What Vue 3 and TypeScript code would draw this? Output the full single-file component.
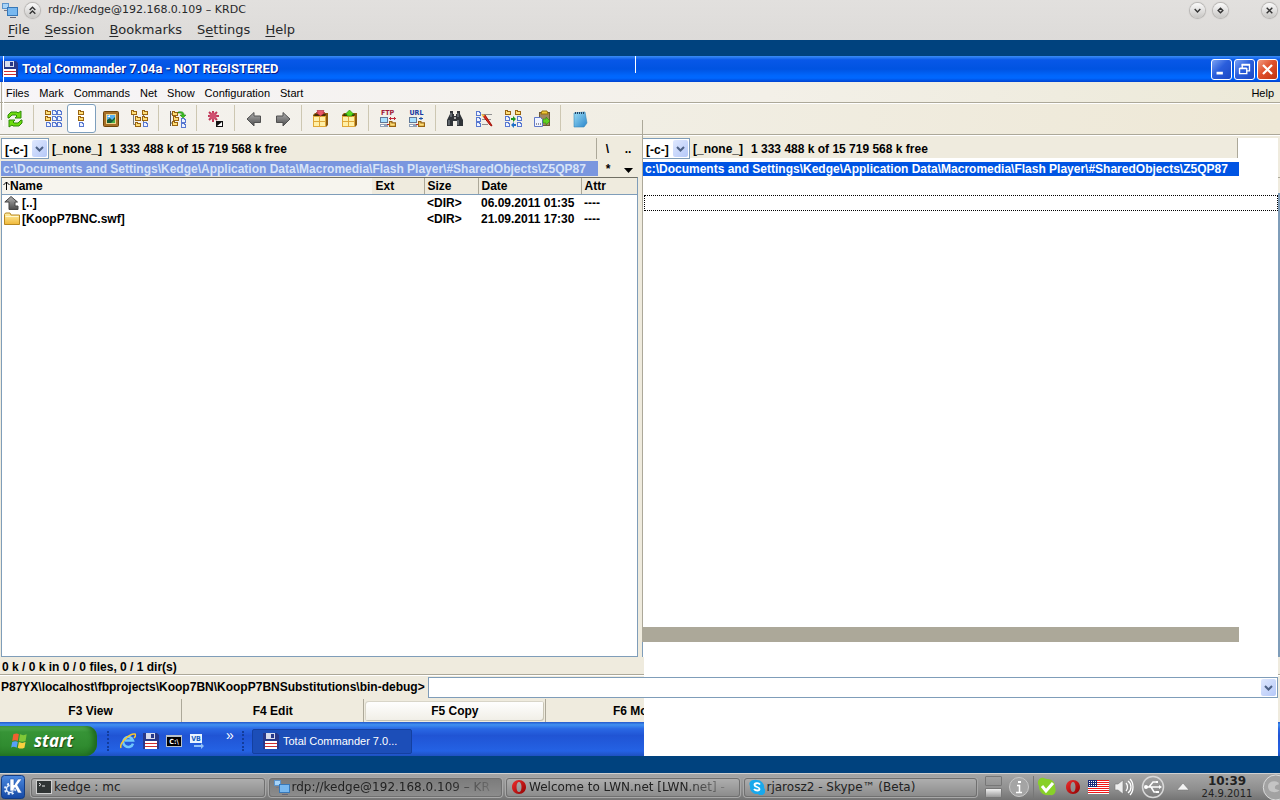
<script setup lang="ts">
import { ref } from 'vue'

interface Tool {
  id: string
  label: string
  caption?: string
  pressed?: boolean
}

interface Entry {
  icon: string
  name: string
  size: string
  date: string
  attr: string
}

interface Task {
  icon: string
  label: string
  active?: boolean
  faded?: boolean
}

const krdcMenu: [string, string, string][] = [
  ['', 'F', 'ile'],
  ['', 'S', 'ession'],
  ['', 'B', 'ookmarks'],
  ['S', 'e', 'ttings'],
  ['', 'H', 'elp'],
]

const menu = ['Files', 'Mark', 'Commands', 'Net', 'Show', 'Configuration', 'Start']

const toolGroups: Tool[][] = [
  [{ id: 'refresh', label: 'Reread source' }],
  [
    { id: 'brief', label: 'Brief view' },
    { id: 'full', label: 'Full view', pressed: true },
    { id: 'thumbs', label: 'Thumbnails' },
    { id: 'tree', label: 'Tree' },
  ],
  [{ id: 'branch', label: 'Branch view' }],
  [{ id: 'invert', label: 'Invert selection' }],
  [
    { id: 'back', label: 'Back' },
    { id: 'forward', label: 'Forward' },
  ],
  [
    { id: 'pack', label: 'Pack files' },
    { id: 'unpack', label: 'Unpack files' },
  ],
  [
    { id: 'ftp', label: 'FTP connect', caption: 'FTP' },
    { id: 'url', label: 'FTP new connection', caption: 'URL' },
  ],
  [
    { id: 'search', label: 'Search' },
    { id: 'rename', label: 'Multi-rename tool' },
    { id: 'sync', label: 'Synchronize directories' },
    { id: 'clip', label: 'Copy names to clipboard' },
  ],
  [{ id: 'notepad', label: 'Notepad' }],
]

const drive = ref('[-c-]')
const command = ref('')
const freeSpace = '1 333 488 k of 15 719 568 k free'
const path =
  'c:\\Documents and Settings\\Kedge\\Application Data\\Macromedia\\Flash Player\\#SharedObjects\\Z5QP87'
const prompt = 'P87YX\\localhost\\fbprojects\\Koop7BN\\KoopP7BNSubstitutions\\bin-debug>'

const entries: Entry[] = [
  { icon: 'up', name: '[..]', size: '<DIR>', date: '06.09.2011 01:35', attr: '----' },
  { icon: 'folder', name: '[KoopP7BNC.swf]', size: '<DIR>', date: '21.09.2011 17:30', attr: '----' },
]

const functionKeys = ['F3 View', 'F4 Edit', 'F5 Copy', 'F6 Move']
const quickLaunch: Tool[] = [
  { id: 'ie', label: 'Internet Explorer' },
  { id: 'floppy', label: 'Total Commander' },
  { id: 'cmd', label: 'Command Prompt', caption: 'C:\\' },
  { id: 'vb', label: 'VirtualBox', caption: 'VB' },
]

const tasks: Task[] = [
  { icon: 'term', label: 'kedge : mc' },
  { icon: 'krdc', label: 'rdp://kedge@192.168.0.109 – KR', active: true, faded: true },
  { icon: 'opera', label: 'Welcome to LWN.net [LWN.net] -', faded: true },
  { icon: 'skype', label: 'rjarosz2 - Skype™ (Beta)' },
]
</script>

<template>
  <div class="screen">
    <svg class="defs" aria-hidden="true">
      <defs>
        <linearGradient id="g-folder" x1="0" y1="0" x2="0" y2="1">
          <stop offset="0" stop-color="#fff0a8" />
          <stop offset="1" stop-color="#f0b838" />
        </linearGradient>
        <linearGradient id="g-arrow" x1="0" y1="0" x2="0" y2="1">
          <stop offset="0" stop-color="#b0b0b0" />
          <stop offset="1" stop-color="#4c4c4c" />
        </linearGradient>
        <linearGradient id="g-note" x1="0" y1="0" x2="1" y2="1">
          <stop offset="0" stop-color="#9adcf4" />
          <stop offset="1" stop-color="#2a86cc" />
        </linearGradient>
        <linearGradient id="g-k" x1="0" y1="0" x2="0" y2="1">
          <stop offset="0" stop-color="#4c8ae0" />
          <stop offset="1" stop-color="#1448a4" />
        </linearGradient>
        <linearGradient id="g-red" x1="0" y1="0" x2="1" y2="1">
          <stop offset="0" stop-color="#f03030" />
          <stop offset="1" stop-color="#900000" />
        </linearGradient>
      </defs>

      <symbol id="i-mf" viewBox="0 0 6 5">
        <path d="M0 0h3v1h3v4H0z" fill="#9a6410" />
        <path d="M1 1h1v1h3v2H1z" fill="#ffdf78" />
      </symbol>
      <symbol id="i-md" viewBox="0 0 5 5">
        <path d="M0 0h4v1h1v4H0z" fill="#5878d0" />
        <path d="M1 1h2v1h1v2H1z" fill="#eef3ff" />
      </symbol>

      <symbol id="i-refresh" viewBox="0 0 18 18">
        <path d="M2 8V5l3-3h6l1 1 3-2v7H9l2-2-1-1H6L3 8z" fill="#6edc10" stroke="#2f8a08" />
        <path d="M16 10v3l-3 3H7l-1-1-3 2v-7h6l-2 2 1 1h4l3-3z" fill="#6edc10" stroke="#2f8a08" />
      </symbol>
      <symbol id="i-brief" viewBox="0 0 18 18">
        <use href="#i-mf" x="1" y="0" width="6" height="5" /><use href="#i-mf" x="1" y="6" width="6" height="5" />
        <use href="#i-md" x="2" y="12" width="5" height="5" />
        <use href="#i-md" x="8" y="0" width="5" height="5" /><use href="#i-md" x="8" y="6" width="5" height="5" /><use href="#i-md" x="8" y="12" width="5" height="5" />
        <use href="#i-md" x="13" y="0" width="5" height="5" /><use href="#i-md" x="13" y="6" width="5" height="5" /><use href="#i-md" x="13" y="12" width="5" height="5" />
      </symbol>
      <symbol id="i-full" viewBox="0 0 18 18">
        <use href="#i-mf" x="5" y="0" width="6" height="5" /><use href="#i-mf" x="5" y="6" width="6" height="5" />
        <use href="#i-md" x="6" y="12" width="5" height="5" />
      </symbol>
      <symbol id="i-thumbs" viewBox="0 0 18 18">
        <rect x="1.5" y="1.5" width="15" height="15" rx="1" fill="#a87028" stroke="#704408" />
        <rect x="4" y="4" width="10" height="10" fill="#f0d890" />
        <rect x="5" y="5" width="8" height="8" fill="#58b0f0" />
        <path d="M5 10l3-2 2 2 3-3v6H5z" fill="#185c38" />
        <path d="M5 7l3-2v2z" fill="#fff" /><path d="M9 13l4-4v4z" fill="#48b048" />
      </symbol>
      <symbol id="i-tree" viewBox="0 0 18 18">
        <path d="M2.500 5v9.500H5M12.500 5v8" fill="none" stroke="#787878" />
        <use href="#i-mf" x="0" y="0" width="6" height="5" /><use href="#i-mf" x="4" y="6" width="6" height="5" /><use href="#i-mf" x="4" y="12" width="6" height="5" />
        <use href="#i-mf" x="11" y="0" width="6" height="5" /><use href="#i-mf" x="11" y="6" width="6" height="5" /><use href="#i-md" x="12" y="12" width="5" height="5" />
      </symbol>
      <symbol id="i-branch" viewBox="0 0 18 18">
        <path d="M1.500 1v15M2 4h2M2 13h3" stroke="#585858" />
        <use href="#i-mf" x="3" y="1" width="6" height="5" /><use href="#i-mf" x="4" y="6" width="6" height="5" /><use href="#i-mf" x="3" y="11" width="6" height="5" />
        <path d="M9 2c4-1 6 0 6 3h2l-3 3-3-3h2c0-2-1-2-4-2z" fill="#38c020" stroke="#187008" stroke-width=".5" />
        <use href="#i-md" x="12" y="8" width="5" height="5" /><use href="#i-md" x="12" y="13" width="5" height="5" />
      </symbol>
      <symbol id="i-invert" viewBox="0 0 18 18">
        <path d="M6 1v11M1 6h11M2 2l8 8M10 2l-8 8" stroke="#c03858" stroke-width="2" />
        <circle cx="6" cy="6" r="3.500" fill="#d05070" />
        <rect x="9.500" y="11.500" width="6" height="5" fill="#fff" stroke="#111" /><path d="M10 12h5l-5 4z" fill="#111" />
      </symbol>
      <symbol id="i-back" viewBox="0 0 18 18">
        <path d="M2 9l7-6.500V6h6.500v6.500H9V16z" fill="url(#g-arrow)" stroke="#505050" />
      </symbol>
      <symbol id="i-forward" viewBox="0 0 18 18">
        <path d="M16 9L9 2.500V6H2.500v6.500H9V16z" fill="url(#g-arrow)" stroke="#505050" />
      </symbol>
      <symbol id="i-box" viewBox="0 0 18 18">
        <path d="M1 5l2-2h13v12l-2 2H1z" fill="#8c5c10" />
        <path d="M3 4h11l-1 2H2z" fill="#463008" />
        <rect x="1" y="6" width="13" height="11" fill="#e0a838" />
        <path d="M2 7h5v4H2zM8 7h5v4H8zM2 12h5v4H2zM8 12h5v4H8z" fill="#fff0a8" />
      </symbol>
      <symbol id="i-pack" viewBox="0 0 18 18">
        <use href="#i-box" width="18" height="18" />
        <path d="M5 .5h7l-1 2h2L8.500 6 4 2.500h2z" fill="#e85868" stroke="#a82030" stroke-width=".6" />
      </symbol>
      <symbol id="i-unpack" viewBox="0 0 18 18">
        <use href="#i-box" width="18" height="18" />
        <path d="M8.500 0L13 4.500h-2V6H6V4.500H4z" fill="#58d820" stroke="#188008" stroke-width=".6" />
      </symbol>
      <symbol id="i-net" viewBox="0 0 18 18">
        <path d="M1 7h8v6H1z" fill="#607898" /><path d="M2 8h6v4H2z" fill="#a8e0ff" />
        <path d="M1 14h8v3H1z" fill="#90a0b8" /><path d="M2 15h3v1H2z" fill="#fff" />
        <path d="M8 14.500h3" stroke="#c02020" />
        <use href="#i-mf" x="10" y="11" width="7" height="6" />
      </symbol>
      <symbol id="i-ftp" viewBox="0 0 18 18">
        <use href="#i-net" width="18" height="18" />
        <path d="M10 8.500h7M11.500 7v3M15.500 7v3" stroke="#c02838" />
      </symbol>
      <symbol id="i-url" viewBox="0 0 18 18">
        <use href="#i-net" width="18" height="18" />
        <path d="M11 8.500h4M13 7v3" stroke="#1850a8" />
      </symbol>
      <symbol id="i-search" viewBox="0 0 18 18">
        <path d="M4 1h3v3h1v2h2V4h1V1h3v3l3 6v6h-6v-5H7v5H1v-6l3-6z" fill="#303438" />
        <path d="M3 10v5M12 10v5M5 3v4M12 3v4" stroke="#8c949c" /><path d="M8 7h2v2H8z" fill="#aaa" />
      </symbol>
      <symbol id="i-rename" viewBox="0 0 18 18">
        <use href="#i-md" x="1" y="1" width="5" height="5" /><use href="#i-md" x="1" y="7" width="5" height="5" /><use href="#i-md" x="1" y="12" width="5" height="5" />
        <path d="M7 4.500h10M7 9.500h9M7 14.500h6" stroke="#909090" />
        <path d="M8 6l7 9 2 1-1-2-6-9z" fill="#e02818" stroke="#a01008" /><path d="M6 4l4 1-2 2z" fill="#f8c040" />
      </symbol>
      <symbol id="i-sync" viewBox="0 0 18 18">
        <use href="#i-mf" x="1" y="0" width="6" height="5" /><use href="#i-mf" x="11" y="0" width="6" height="5" />
        <use href="#i-md" x="1" y="6" width="5" height="5" /><use href="#i-md" x="1" y="12" width="5" height="5" />
        <use href="#i-md" x="13" y="6" width="5" height="5" /><use href="#i-md" x="13" y="12" width="5" height="5" />
        <path d="M7 8h2V6l3 3-3 3v-2H7z" fill="#209820" /><path d="M12 14h-2v-2l-3 3 3 3v-2h2z" fill="#2070c8" />
      </symbol>
      <symbol id="i-clip" viewBox="0 0 18 18">
        <rect x="6.500" y="2.500" width="10" height="13" fill="#a08860" stroke="#6c5838" /><path d="M9 1h5l1 3H8z" fill="#f0c838" stroke="#987008" />
        <path d="M1.500 7.500h6l2 2v7h-8z" fill="#f0f4ff" stroke="#6078c8" /><path d="M3 14h1M5 14h1M7 14h1" stroke="#334" />
        <path d="M10 9h3V7l4 4-4 4v-2h-3z" fill="#60d020" stroke="#208008" stroke-width=".5" />
      </symbol>
      <symbol id="i-notepad" viewBox="0 0 18 18">
        <path d="M3 3l11-1 2 11-3 4H3z" fill="url(#g-note)" stroke="#3888b8" stroke-width=".6" />
        <path d="M4 3h1M6 3h1M8 3h1M10 3h1M12 3h1" stroke="#246" stroke-width="2" />
      </symbol>

      <symbol id="i-floppy" viewBox="0 0 16 16">
        <path d="M0 0h14l2 2v14H0z" fill="#283888" />
        <path d="M3 0h9v6H3z" fill="#d8dcec" /><path d="M8 1h3v4H8z" fill="#283888" />
        <path d="M2 8h12v8H2z" fill="#fff" /><path d="M2 10.500h12M2 13.500h12" stroke="#d03030" />
      </symbol>
      <symbol id="i-up" viewBox="0 0 16 16">
        <path d="M7 1.500L13.500 7H11v4h3v3.500H5V7H.8z" fill="url(#g-arrow)" stroke="#444" />
      </symbol>
      <symbol id="i-folder" viewBox="0 0 16 16">
        <path d="M.5 3.500l1-1.500H6l1 2h8.500v9.500H.5z" fill="url(#g-folder)" stroke="#b88820" /><path d="M1.500 5.500h13" stroke="#fff8d0" />
      </symbol>
      <symbol id="i-chevron" viewBox="0 0 9 6">
        <path d="M1 1l3.500 3.500L8 1" fill="none" stroke="#4d6185" stroke-width="2" />
      </symbol>
      <symbol id="i-ie" viewBox="0 0 16 16">
        <path d="M13 10.500A5 5 0 1 1 13 7.500H5" fill="none" stroke="#70c8fc" stroke-width="2.500" />
        <path d="M1 15C-1 10 10 0 15 1c1 1 0 3-1 4" fill="none" stroke="#f8c830" stroke-width="1.500" />
      </symbol>
      <symbol id="i-cmd" viewBox="0 0 16 16">
        <path d="M0 2h16v12H0z" fill="#b8c0c8" /><path d="M1 4h14v9H1z" fill="#000" />
      </symbol>
      <symbol id="i-vb" viewBox="0 0 16 16">
        <path d="M1 1h12v9H1z" fill="#e8f4ff" />
        <path d="M5 12h7v-2l3 3-3 3v-2H5z" fill="#90c0f8" />
      </symbol>
      <symbol id="i-flag" viewBox="0 0 18 16">
        <path d="M3 2c2-1 4-1 5 0L7 8C5 7 4 7 2 8z" fill="#f06030" /><path d="M9 2c2 1 4 1 6 0l-1 6c-2 1-4 1-6 0z" fill="#80c838" />
        <path d="M2 9c2-1 4-1 5 0l-1 5c-2-1-4-1-5 0z" fill="#58a0f8" /><path d="M8 9c2 1 4 1 6 0l-1 5c-2 1-4 1-6 0z" fill="#f8d040" />
      </symbol>
      <symbol id="i-krdc" viewBox="0 0 16 16">
        <path d="M0 1h7v6H0z" fill="#5c94cc" /><path d="M1 2h5v4H1z" fill="#a8d4f8" />
        <path d="M5 5h11v9H5z" fill="#3878b8" /><path d="M6 6h9v7H6z" fill="#78b8f0" /><path d="M8 15h6v1H8z" fill="#667" />
        <path d="M2 8h3v1H2z" fill="#778" />
      </symbol>
      <symbol id="i-term" viewBox="0 0 16 16">
        <path d="M0 1h16v14H0z" fill="#d0d0d0" /><path d="M1 2h14v12H1z" fill="#303434" />
        <path d="M3 4l2 1.500L3 7M6 7h3" fill="none" stroke="#e8e8e8" />
      </symbol>
      <symbol id="i-opera" viewBox="0 0 16 16">
        <path fill-rule="evenodd" d="M8 1C4 1 1 4 1 8s3 7 7 7 7-3 7-7-3-7-7-7zm0 2c1.500 0 2.500 2 2.500 5S9.500 13 8 13s-2.500-2-2.500-5S6.500 3 8 3z" fill="url(#g-red)" />
      </symbol>
      <symbol id="i-skype" viewBox="0 0 16 16">
        <path d="M5 1a4 4 0 0 1 3 0 7 7 0 0 1 7 8 4 4 0 0 1-6 6 7 7 0 0 1-8-8 4 4 0 0 1 4-6z" fill="#18a8ec" />
        <path d="M11 5.500C9.500 3.500 5.500 4 5.500 6c0 2.500 5 1.500 5 4 0 2-4 2-5.500 0" fill="none" stroke="#fff" stroke-width="1.800" />
      </symbol>
      <symbol id="i-kmenu" viewBox="0 0 24 24">
        <rect x=".5" y=".5" width="23" height="23" rx="3" fill="url(#g-k)" stroke="#123c84" />
        <circle cx="9" cy="14" r="5" fill="none" stroke="#e8f2ff" stroke-width="2" stroke-dasharray="2 2" />
        <circle cx="9" cy="14" r="3.500" fill="none" stroke="#e8f2ff" stroke-width="1.500" />
        <path d="M9 4h4v6l4-6h4l-4.500 6 4.500 8h-4l-3-5.500-1 1.500v2H9z" fill="#fff" stroke="#2458b4" stroke-width=".6" />
      </symbol>
    </svg>

    <header class="krdc">
      <div class="krdc-title">
        <svg class="ic16" aria-hidden="true"><use href="#i-krdc" /></svg>
        <button class="round up" aria-label="Keep above">
          <svg viewBox="0 0 16 16" aria-hidden="true"><path d="M5 7.500l3-3 3 3M5 11.500l3-3 3 3" /></svg>
        </button>
        <span class="krdc-name">rdp://kedge@192.168.0.109 – KRDC</span>
        <button class="round" aria-label="Minimize">
          <svg viewBox="0 0 16 16" aria-hidden="true"><path d="M5 6.500l3 3 3-3" /></svg>
        </button>
        <button class="round max" aria-label="Maximize">
          <svg viewBox="0 0 16 16" aria-hidden="true"><path d="M8 5.500L10.500 8 8 10.500 5.500 8z" /></svg>
        </button>
        <button class="round" aria-label="Close">
          <svg viewBox="0 0 16 16" aria-hidden="true"><path d="M5 5l6 6M11 5l-6 6" /></svg>
        </button>
      </div>
      <nav class="krdc-menu">
        <button v-for="m in krdcMenu" :key="m[2]">{{ m[0] }}<u>{{ m[1] }}</u>{{ m[2] }}</button>
      </nav>
    </header>

    <main class="desktop">
      <section class="window">
        <i class="tear tear-grey"></i>
        <i class="tear tear-white"></i>
        <i class="tear tear-title"></i>
        <i class="tear tear-split"></i>
        <div class="titlebar">
          <svg class="ic16" aria-hidden="true"><use href="#i-floppy" /></svg>
          <h1>Total Commander 7.04a - NOT REGISTERED</h1>
          <button class="xp" aria-label="Minimize">
            <svg viewBox="0 0 21 21" aria-hidden="true"><path d="M5 13h7v3H5z" fill="#fff" /></svg>
          </button>
          <button class="xp" aria-label="Restore">
            <svg viewBox="0 0 21 21" aria-hidden="true">
              <path d="M8 9V5h8v7h-3M7 5.500h9" fill="none" stroke="#fff" stroke-width="1.500" />
              <path d="M5 9.500h8V15H5zM5 9h8" fill="none" stroke="#fff" stroke-width="1.500" />
            </svg>
          </button>
          <button class="xp close" aria-label="Close">
            <svg viewBox="0 0 21 21" aria-hidden="true"><path d="M5.500 5.500l10 10M15.500 5.500l-10 10" stroke="#fff" stroke-width="2.500" /></svg>
          </button>
        </div>

        <nav class="menubar">
          <button v-for="m in menu" :key="m">{{ m }}</button>
          <button class="help">Help</button>
        </nav>

        <div class="toolbar">
          <div v-for="(group, i) in toolGroups" :key="i" class="tool-group">
            <button
              v-for="t in group"
              :key="t.id"
              :class="{ pressed: t.pressed }"
              :aria-label="t.label"
            >
              <svg class="ic18" aria-hidden="true"><use :href="'#i-' + t.id" /></svg>
              <span v-if="t.caption" class="caption" :class="t.id">{{ t.caption }}</span>
            </button>
          </div>
        </div>

        <div class="panels">
          <section class="panel left">
            <div class="drive-row">
              <span class="drive">
                <select v-model="drive" aria-label="Left drive"><option>[-c-]</option></select>
                <span class="drop"><svg aria-hidden="true"><use href="#i-chevron" /></svg></span>
              </span>
              <span class="volume">[_none_]</span>
              <span class="free">{{ freeSpace }}</span>
              <button class="nav-btn root">\</button>
              <button class="nav-btn">..</button>
            </div>
            <div class="path-row">
              <span class="path">{{ path }}</span>
              <button class="nav-btn">*</button>
              <button class="nav-btn" aria-label="History">
                <svg class="tri" viewBox="0 0 9 5" aria-hidden="true"><path d="M0 0h9L4.500 5z" /></svg>
              </button>
            </div>
            <div class="list">
              <table>
                <colgroup>
                  <col /><col class="c-ext" /><col class="c-size" /><col class="c-date" /><col class="c-attr" />
                </colgroup>
                <thead>
                  <tr>
                    <th class="sorted">
                      <svg class="sort" viewBox="0 0 7 9" aria-hidden="true"><path d="M3.500 9V1M.5 4l3-3 3 3" /></svg>Name
                    </th>
                    <th>Ext</th><th>Size</th><th>Date</th><th>Attr</th>
                  </tr>
                </thead>
                <tbody>
                  <tr v-for="e in entries" :key="e.name">
                    <td><span class="entry"><svg class="ic16" aria-hidden="true"><use :href="'#i-' + e.icon" /></svg>{{ e.name }}</span></td>
                    <td></td>
                    <td>{{ e.size }}</td>
                    <td>{{ e.date }}</td>
                    <td>{{ e.attr }}</td>
                  </tr>
                </tbody>
              </table>
            </div>
          </section>

          <section class="panel right">
            <div class="drive-row">
              <span class="drive">
                <select v-model="drive" aria-label="Right drive"><option>[-c-]</option></select>
                <span class="drop"><svg aria-hidden="true"><use href="#i-chevron" /></svg></span>
              </span>
              <span class="volume">[_none_]</span>
              <span class="free">{{ freeSpace }}</span>
            </div>
            <div class="path-row"><span class="path">{{ path }}</span></div>
            <div class="cursor-row"></div>
            <div class="scroll"></div>
            <div class="tail"></div>
          </section>
          <div class="edge"></div>
        </div>

        <div class="lower">
          <div class="blank"></div>
          <div class="status">0 k / 0 k in 0 / 0 files, 0 / 1 dir(s)</div>
          <div class="command">
            <label for="cmdline">{{ prompt }}</label>
            <span class="combo">
              <input id="cmdline" v-model="command" type="text" />
              <button class="drop" aria-label="Command history"><svg aria-hidden="true"><use href="#i-chevron" /></svg></button>
            </span>
          </div>
          <div class="fkeys">
            <button v-for="k in functionKeys" :key="k" :class="{ hot: k === 'F5 Copy' }"><span>{{ k }}</span></button>
          </div>
          <div class="taskbar">
            <button class="start">
              <svg aria-hidden="true"><use href="#i-flag" /></svg><span>start</span>
            </button>
            <i class="grip"></i>
            <button v-for="q in quickLaunch" :key="q.id" class="quick" :aria-label="q.label">
              <svg class="ic16" aria-hidden="true"><use :href="'#i-' + q.id" /></svg>
              <span v-if="q.caption" class="caption" :class="q.id">{{ q.caption }}</span>
            </button>
            <span class="more">»</span>
            <i class="grip"></i>
            <button class="xp-task">
              <svg class="ic16" aria-hidden="true"><use href="#i-floppy" /></svg>Total Commander 7.0...
            </button>
          </div>
        </div>
      </section>
    </main>

    <footer class="kpanel">
      <button class="kmenu" aria-label="Application launcher"><svg aria-hidden="true"><use href="#i-kmenu" /></svg></button>
      <div class="tasks">
        <button v-for="t in tasks" :key="t.label" :class="{ active: t.active }">
          <svg class="ic16" aria-hidden="true"><use :href="'#i-' + t.icon" /></svg>
          <span :class="{ faded: t.faded }">{{ t.label }}</span>
        </button>
      </div>
      <div class="tray">
        <span class="pager"><i></i><i class="on"></i></span>
        <svg class="t20" viewBox="0 0 20 20" aria-hidden="true">
          <circle cx="10" cy="10" r="9.500" fill="#a4a4a4" stroke="#c8c8c8" />
          <path d="M9 4h3v2H9z" fill="#fff" /><path d="M8 8.500h2.500V15M7 15.500h6" fill="none" stroke="#fff" stroke-width="1.500" />
        </svg>
        <i class="rule"></i>
        <svg class="t20" viewBox="0 0 20 20" aria-hidden="true">
          <path d="M4 1c3-1 4 1 6 1 6 0 8 4 8 8 2 5-1 9-5 8C6 19 2 15 2 9 0 6 1 2 4 1z" fill="#88d028" />
          <path d="M5 9l4 5 7-8" fill="none" stroke="#fff" stroke-width="3" />
        </svg>
        <svg class="opera" aria-hidden="true"><use href="#i-opera" /></svg>
        <svg class="us" viewBox="0 0 21 14" aria-hidden="true">
          <path d="M0 0h21v14H0z" fill="#fff" />
          <path d="M0 .5h21M0 2.500h21M0 4.500h21M0 6.500h21M0 8.500h21M0 10.500h21M0 12.500h21" stroke="#f01818" />
          <path d="M0 0h9v7H0z" fill="#182878" />
          <path d="M1 1.500h8M1 3.500h8M1 5.500h8" stroke="#fff" stroke-dasharray="1 1" />
        </svg>
        <svg class="t20" viewBox="0 0 20 20" aria-hidden="true">
          <path d="M1 7h3l5-4v14l-5-4H1z" fill="#eee" stroke="#777" stroke-width=".6" />
          <path d="M12 6c2 2 2 6 0 8M14 4c4 3 4 9 0 12M16 2c4 4 4 12 0 16" fill="none" stroke="#fff" stroke-width="1.300" />
        </svg>
        <svg class="usb" viewBox="0 0 24 24" aria-hidden="true">
          <circle cx="12" cy="12" r="10.500" fill="none" stroke="#d8d8d8" stroke-width="1.500" />
          <path d="M5 12h14M8 12l4-5h3M10 12l3 5h3" fill="none" stroke="#fff" stroke-width="1.500" />
          <path d="M18 10l3 2-3 2zM15 6h2v2h-2zM15 16h3v2h-3z" fill="#fff" /><circle cx="5" cy="12" r="2" fill="#fff" />
        </svg>
        <svg class="expand" viewBox="0 0 12 8" aria-hidden="true"><path d="M6 0l6 7H0z" fill="#f4f4f4" stroke="#777" stroke-width=".6" /></svg>
        <span class="clock"><b>10:39</b><span>24.9.2011</span></span>
        <svg class="cashew" viewBox="0 0 18 27" aria-hidden="true">
          <circle cx="14" cy="14" r="13" fill="#a2a2a2" stroke="#ddd" />
          <path d="M17 9c-5-3-12-1-11 5s9 6 12 3c-3-1-5-1-5-3s2-3 4-3z" fill="#c4c4c4" />
        </svg>
      </div>
    </footer>
  </div>
</template>

<style>
body {
  margin: 0;
  background: #00427e;
}
</style>

<style scoped>
.screen {
  display: flex;
  flex-direction: column;
  min-height: 100vh;
  overflow: hidden;
  background: #00427e;
  color: #000;
  font: 11px/16px "Liberation Sans", Arial, sans-serif;
}
.screen * {
  box-sizing: border-box;
}
.defs {
  position: absolute;
  width: 0;
  height: 0;
}
button,
select,
input {
  margin: 0;
  padding: 0;
  border: 0;
  background: none;
  color: inherit;
  font: inherit;
}
.ic16 {
  display: block;
  flex: none;
  width: 16px;
  height: 16px;
}
.ic18 {
  display: block;
  width: 18px;
  height: 18px;
}

/* Tiny lettering that lies on top of an icon */
.caption {
  position: absolute;
  top: 5px;
  left: 0;
  width: 100%;
  font: bold 7px/8px "DejaVu Sans Condensed", "DejaVu Sans", sans-serif;
  text-align: center;
}
.caption.ftp {
  color: #a01838;
}
.caption.url {
  color: #1838a0;
}
.caption.cmd {
  width: 16px;
}
.caption.vb {
  top: 2px;
  width: 14px;
  color: #1860c0;
}

/* KRDC window frame */
.krdc {
  height: 40px;
  background: linear-gradient(#e2e0de, #dddbd9);
  color: #26282a;
  font-family: "DejaVu Sans", sans-serif;
}
.krdc-title {
  display: flex;
  align-items: center;
  height: 20px;
  padding: 0 3px 0 2px;
}
.krdc-name {
  flex: 1;
  padding-left: 8px;
  font-size: 11px;
}
.round {
  width: 15px;
  height: 15px;
  margin-right: 8px;
  border-radius: 50%;
  background: linear-gradient(#fafafa, #c8c6c4);
  box-shadow: 0 0 1px 1px #b4b2b0;
}
.round.up {
  margin: 0 0 0 7px;
}
.round.max {
  margin-right: 34px;
}
.round:last-child {
  margin-right: 0;
}
.round svg {
  display: block;
  fill: none;
  stroke: #333;
  stroke-width: 1.5;
}
.krdc-menu {
  display: flex;
  gap: 15px;
  padding-left: 8px;
  font-size: 13px;
  line-height: 20px;
}
.krdc-menu u {
  text-underline-offset: 2px;
}

/* Remote desktop */
.desktop {
  display: flex;
  flex: 1;
  padding: 16px 0 17px;
}
.window {
  position: relative;
  display: flex;
  flex: 1;
  flex-direction: column;
  min-width: 0;
  background: #efebde;
}
.tear {
  position: absolute;
  z-index: 3;
  width: 1px;
}
.tear-grey {
  top: 26px;
  left: 1px;
  height: 38px;
  background: #aca899;
}
.tear-white {
  top: 0;
  left: 3px;
  height: 70px;
  background: #fff;
}
.tear-title {
  top: 0;
  left: calc(50% - 5px);
  height: 17px;
  background: #fff;
}
.tear-split {
  top: 64px;
  left: calc(50% + 2px);
  height: 18px;
  background: #aca899;
}
.titlebar {
  display: flex;
  align-items: center;
  gap: 2px;
  height: 26px;
  padding: 0 2px;
  background: linear-gradient(#3a8cf6 0, #0858e8 15%, #0053e1 50%, #0066fc 75%, #0068ff 85%, #0042d0 100%);
  color: #fff;
}
.titlebar h1 {
  flex: 1;
  margin: 0;
  padding-left: 2px;
  font: bold 13px/20px Roboto, sans-serif;
  text-shadow: 1px 1px #0a1883;
}
.xp {
  width: 21px;
  height: 21px;
  border: 1px solid #fff;
  border-radius: 3px;
  background: linear-gradient(135deg, #7ba2f4, #2a5edc 45%, #1c48c4);
}
.xp.close {
  background: linear-gradient(135deg, #f09a80, #e0502c 45%, #c03410);
}
.xp svg {
  display: block;
}
.menubar {
  display: flex;
  gap: 10px;
  height: 22px;
  padding: 0 6px;
  border-bottom: 1px solid #fff;
  background: linear-gradient(90deg, #f7f5f8, #f3f0e8 60%, #ece9d8);
  box-shadow: inset 0 -1px #aca899;
  line-height: 18px;
}
.menubar .help {
  margin-left: auto;
}
.toolbar {
  display: flex;
  height: 32px;
  border-bottom: 1px solid #fff;
  background: linear-gradient(90deg, #f5f3f0, #f1eee4 50%, #eee8d6);
  box-shadow: inset 0 -1px #aca899;
}
.tool-group {
  display: flex;
}
.tool-group + .tool-group::before {
  width: 1px;
  height: 26px;
  margin: 1px 4px 0;
  background: #cdc7b2;
  content: "";
}
.toolbar button {
  position: relative;
  display: flex;
  align-items: center;
  justify-content: center;
  width: 29px;
  height: 29px;
}
.toolbar .pressed {
  border: 1px solid #7e9fbd;
  border-radius: 3px;
  background: #fff;
}

/* File panels */
.panels {
  display: flex;
  flex: 1;
  padding-top: 2px;
  font-size: 12px;
  font-weight: bold;
}
.panel {
  display: flex;
  flex: 1;
  flex-direction: column;
  min-width: 0;
}
.panel.left {
  flex: 0 0 calc(50% + 2px);
  padding: 0 4px 0 1px;
}
.panel.right {
  border-left: 1px solid #aca899;
  background: #fff;
}
.drive-row {
  display: flex;
  height: 21px;
  line-height: 22px;
}
.right .drive-row {
  height: 20px;
  margin-right: 40px;
  border-right: 1px solid #aca899;
  background: #efebde;
}
.drive {
  position: relative;
  width: 48px;
  height: 21px;
}
.right .drive {
  width: 47px;
}
.drive select {
  display: block;
  width: 100%;
  height: 21px;
  padding-left: 3px;
  border: 1px solid #7f9db9;
  border-radius: 0;
  appearance: none;
  background: #fff;
}
.right .drive select {
  border-left: 0;
}
.drop {
  display: flex;
  align-items: center;
  justify-content: center;
  width: 15px;
  height: 17px;
  border-radius: 2px;
  background: linear-gradient(135deg, #dfe8fe, #b5c8f8);
}
.drop svg {
  width: 9px;
  height: 6px;
}
.drive .drop {
  position: absolute;
  top: 2px;
  right: 2px;
  pointer-events: none;
}
.volume {
  margin: 0 8px 0 3px;
}
.left .free {
  flex: 1;
}
.nav-btn {
  width: 20px;
  line-height: 14px;
}
.nav-btn.root {
  width: 22px;
  border-left: 1px solid #aca899;
}
.path-row {
  display: flex;
  height: 15px;
  margin-top: 2px;
  line-height: 16px;
}
.right .path-row {
  height: 14px;
  margin: 4px 39px 0 0;
  line-height: 15px;
}
.path {
  flex: 1;
  overflow: hidden;
  padding-left: 2px;
  background: #7a96df;
  color: #d8e4f8;
  white-space: nowrap;
}
.right .path {
  background: #0054e3;
  color: #fff;
}
.tri {
  width: 9px;
  height: 5px;
}
.list {
  flex: 1;
  margin-top: 1px;
  border: 1px solid #7f9db9;
  border-top: 1px solid #716f64;
  background: #fff;
}
table {
  width: 100%;
  border-collapse: collapse;
  table-layout: fixed;
}
.c-ext {
  width: 52px;
}
.c-size {
  width: 54px;
}
.c-date {
  width: 103px;
}
.c-attr {
  width: 56px;
}
th {
  height: 16px;
  padding: 0 0 0 3px;
  border-right: 1px solid #aca899;
  border-bottom: 1px solid #7f9db9;
  background: #efebde;
  line-height: 14px;
  text-align: left;
}
th:last-child {
  border-right: 0;
}
th.sorted {
  padding-left: 1px;
  border-right-color: #efebde;
  background: #f7f5ee;
}
.sort {
  width: 7px;
  height: 9px;
  fill: none;
  stroke: #000;
}
td {
  height: 16px;
  padding: 0 0 0 3px;
  line-height: 16px;
  white-space: nowrap;
}
td:first-child {
  padding-left: 2px;
}
.entry {
  display: flex;
  gap: 2px;
}
.cursor-row {
  height: 16px;
  margin: 19px 0 0 1px;
  border: 1px dotted #000;
}
.scroll {
  flex: 1;
  margin-right: 39px;
  border-bottom: 15px solid #aca899;
}
.tail {
  height: 15px;
  margin-left: -1px;
  border-left: 1px solid #7f9db9;
}
.edge {
  width: 2px;
  background: linear-gradient(#efebde 39px, #aca899 39px, #aca899 40px, #efebde 40px, #efebde 55px, #7f9db9 55px);
}

/* Status, command line and function keys */
.lower {
  position: relative;
  font-size: 12px;
  font-weight: bold;
}
.blank {
  position: absolute;
  z-index: 1;
  top: 0;
  right: 2px;
  bottom: 0;
  left: calc(50% + 4px);
  background: #fff;
}
.status {
  height: 19px;
  padding-left: 2px;
  border-bottom: 1px solid #fff;
  box-shadow: inset 0 -1px #aca899;
  line-height: 20px;
}
.command {
  display: flex;
  height: 23px;
  padding: 1px 2px 1px 1px;
}
.command label {
  flex: 0 0 427px;
  line-height: 20px;
  white-space: nowrap;
}
.combo {
  position: relative;
  z-index: 2;
  display: flex;
  flex: 1;
  align-items: center;
  padding-right: 1px;
  border: 1px solid #7f9db9;
  background: #fff;
}
.combo input {
  flex: 1;
  min-width: 0;
}
.fkeys {
  display: grid;
  grid-template-columns: repeat(7, 1fr);
  height: 23px;
  padding: 0 5px 0 0;
}
.fkeys button {
  padding: 2px 1px 1px;
  border-right: 1px solid #aca899;
}
.fkeys span {
  display: block;
  height: 20px;
  border-radius: 3px;
  line-height: 21px;
}
.fkeys .hot span {
  background: linear-gradient(#fff, #f0eee6);
  box-shadow: inset -1px -1px #c8c4b4, inset 1px 1px #d8d5c8;
}
.taskbar {
  display: flex;
  align-items: center;
  height: 34px;
  padding-top: 4px;
  background: linear-gradient(#2458cc 0, #4090f0 8%, #2a68e4 20%, #2054d4 40%, #2462e4 85%, #1e50c0 100%);
  color: #fff;
  font-size: 11px;
  font-weight: normal;
}
.start {
  display: flex;
  align-items: center;
  width: 97px;
  height: 30px;
  padding-left: 10px;
  border-radius: 0 10px 12px 0;
  background: linear-gradient(#5cb85c 0, #379437 20%, #308c30 65%, #267a26 100%);
  box-shadow: inset -4px 0 5px #1f6a1f;
  font: italic bold 17px/24px "Open Sans", sans-serif;
  text-shadow: 1px 1px 1px #184818;
}
.start svg {
  width: 20px;
  height: 18px;
  margin-right: 4px;
}
.grip {
  width: 3px;
  height: 20px;
  margin: 0 10px;
  border-left: 2px dotted #123c9c;
}
.quick {
  position: relative;
  width: 23px;
  padding-right: 7px;
}
.more {
  width: 16px;
  margin: -12px 0 0 14px;
  font-size: 14px;
}
.more + .grip {
  margin: 0 7px 0 0;
}
.xp-task {
  display: flex;
  align-items: center;
  gap: 4px;
  width: 160px;
  height: 25px;
  padding-left: 10px;
  border: 1px solid #1440a0;
  border-radius: 2px;
  background: #1c4eb8;
}

/* Local desktop panel */
.kpanel {
  display: flex;
  align-items: center;
  height: 27px;
  padding-left: 1px;
  border-top: 1px solid #d0d0d0;
  background: linear-gradient(#a6a6a6, #8e8e8e 60%, #747474);
  color: #222;
  font: 12px/18px "DejaVu Sans", sans-serif;
}
.kmenu svg {
  display: block;
  width: 24px;
  height: 24px;
}
.tasks {
  display: grid;
  flex: 1;
  grid-template-columns: repeat(4, 1fr);
  gap: 4px;
  margin: 0 7px 0 6px;
}
.tasks button {
  display: flex;
  align-items: center;
  gap: 2px;
  min-width: 0;
  height: 19px;
  padding: 0 4px;
  border: 1px solid #707070;
  border-radius: 3px;
  background: linear-gradient(#aeaeae, #8c8c8c);
  box-shadow: 0 0 0 1px #a8a8a8;
  text-align: left;
}
.tasks .active {
  background: linear-gradient(#7c7c7c, #8c8c8c);
}
.tasks span {
  flex: 1;
  white-space: nowrap;
}
.faded {
  mask-image: linear-gradient(90deg, #000 75%, transparent 102%);
}
.tray {
  display: flex;
  flex: none;
  align-items: center;
}
.t20 {
  width: 20px;
  height: 20px;
}
.pager {
  display: grid;
  gap: 2px;
  width: 17px;
  margin: 0 7px 0 1px;
}
.pager i {
  height: 10px;
  border: 1px solid #777;
  border-radius: 1px;
}
.pager .on {
  background: linear-gradient(#f0f0f0, #999);
}
.rule {
  width: 1px;
  height: 22px;
  margin: 0 3px 0 4px;
  background: #777;
}
.opera {
  width: 16px;
  height: 16px;
  margin: 0 7px 0 8px;
}
.us {
  width: 21px;
  height: 14px;
  margin-right: 5px;
}
.usb {
  width: 24px;
  height: 24px;
  margin: 0 12px 0 7px;
}
.expand {
  width: 12px;
  height: 8px;
  margin-right: 12px;
}
.clock {
  display: grid;
  width: 52px;
  margin-right: 9px;
  font-size: 10px;
  line-height: 12px;
  text-align: center;
  white-space: nowrap;
}
.clock b {
  font-size: 12px;
  line-height: 13px;
}
.cashew {
  width: 18px;
  height: 26px;
}
</style>
